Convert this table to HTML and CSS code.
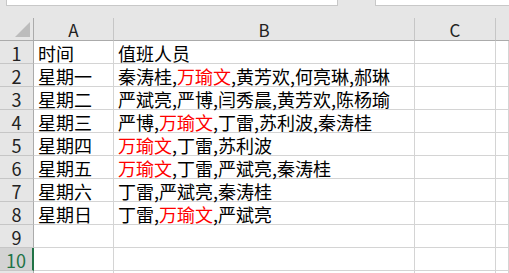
FILE: index.html
```html
<!DOCTYPE html>
<html lang="zh">
<head>
<meta charset="utf-8">
<link rel="stylesheet" href="styles.css">
</head>
<body>
<div class="top">
  <div class="box box-a"></div>
  <div class="box box-b"></div>
</div>
<div class="sheet">
  <div class="corner"><span class="tri"></span></div>
  <div class="colhead">A</div>
  <div class="colhead">B</div>
  <div class="colhead">C</div>
  <div class="colhead last"></div>

  <div class="rowhead">1</div><div class="cell">时间</div><div class="cell">值班人员</div><div class="cell"></div><div class="cell"></div>
  <div class="rowhead">2</div><div class="cell">星期一</div><div class="cell">秦涛桂,<span class="red">万瑜文</span>,黄芳欢,何亮琳,郝琳</div><div class="cell"></div><div class="cell"></div>
  <div class="rowhead">3</div><div class="cell">星期二</div><div class="cell">严斌亮,严博,闫秀晨,黄芳欢,陈杨瑜</div><div class="cell"></div><div class="cell"></div>
  <div class="rowhead">4</div><div class="cell">星期三</div><div class="cell">严博,<span class="red">万瑜文</span>,丁雷,苏利波,秦涛桂</div><div class="cell"></div><div class="cell"></div>
  <div class="rowhead">5</div><div class="cell">星期四</div><div class="cell"><span class="red">万瑜文</span>,丁雷,苏利波</div><div class="cell"></div><div class="cell"></div>
  <div class="rowhead">6</div><div class="cell">星期五</div><div class="cell"><span class="red">万瑜文</span>,丁雷,严斌亮,秦涛桂</div><div class="cell"></div><div class="cell"></div>
  <div class="rowhead">7</div><div class="cell">星期六</div><div class="cell">丁雷,严斌亮,秦涛桂</div><div class="cell"></div><div class="cell"></div>
  <div class="rowhead">8</div><div class="cell">星期日</div><div class="cell">丁雷,<span class="red">万瑜文</span>,严斌亮</div><div class="cell"></div><div class="cell"></div>
  <div class="rowhead">9</div><div class="cell"></div><div class="cell"></div><div class="cell"></div><div class="cell"></div>
  <div class="rowhead sel">10</div><div class="cell"></div><div class="cell"></div><div class="cell"></div><div class="cell"></div>
  <div class="rowhead empty"></div><div class="cell"></div><div class="cell"></div><div class="cell"></div><div class="cell"></div>
</div>
</body>
</html>
```
FILE: styles.css
```css
html, body {
  margin: 0;
  padding: 0;
  background: #ffffff;
  width: 509px;
  height: 273px;
  overflow: hidden;
  font-family: "Noto Sans CJK SC", "Noto Sans", sans-serif;
  color: #000;
}
.top {
  display: flex;
  gap: 37px;
  padding-left: 6px;
  height: 18px;
  background: #e6e6e6;
}
.box {
  height: 5px;
  background: #fff;
  border-left: 1px solid #c8c8c8;
  border-bottom: 1px solid #c8c8c8;
}
.box-a { width: 330px; border-right: 1px solid #c8c8c8; }
.box-b { flex: 1; }
.sheet {
  display: grid;
  grid-template-columns: 34px 80px 301px 81px 1fr;
  grid-template-rows: repeat(11, 23px) 2px;
  height: 255px;
  overflow: hidden;
}
.sheet > div {
  box-sizing: border-box;
}
.corner {
  background: #e6e6e6;
  border-right: 1px solid #ababab;
  border-bottom: 1px solid #ababab;
  position: relative;
}
.tri {
  position: absolute;
  left: 15px;
  top: 4px;
  width: 0;
  height: 0;
  border-left: 15px solid transparent;
  border-bottom: 15px solid #bcbcbc;
}
.colhead {
  background: #e6e6e6;
  border-right: 1px solid #c6c6c6;
  border-bottom: 1px solid #ababab;
  text-align: center;
  font-size: 17px;
  line-height: 20px;
  padding-top: 2px;
  color: #222;
}
.colhead.last { border-right: none; }
.rowhead {
  background: #e6e6e6;
  border-right: 1px solid #ababab;
  border-bottom: 1px solid #c6c6c6;
  text-align: center;
  font-size: 18px;
  line-height: 20px;
  padding-top: 2px;
  color: #222;
}
.rowhead.sel {
  background: #d3d3d3;
  border-right: 2px solid #217346;
  color: #217346;
}
.cell {
  border-right: 1px solid #d4d4d4;
  border-bottom: 1px solid #d4d4d4;
  padding-left: 4px;
  font-size: 18px;
  line-height: 20px;
  padding-top: 2px;
  white-space: nowrap;
}
.red { color: #ff0000; }
```
